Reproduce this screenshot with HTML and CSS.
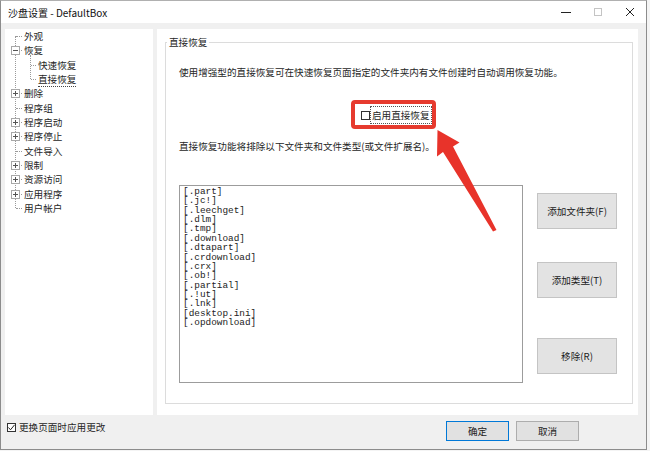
FILE: index.html
```html
<!DOCTYPE html>
<html lang="zh-CN">
<head>
<meta charset="utf-8">
<title>沙盘设置 - DefaultBox</title>
<link rel="stylesheet" href="styles.css">
</head>
<body>
<div class="window">
  <div class="titlebar">
    <span class="title">沙盘设置 - DefaultBox</span>
    <div class="controls">
      <span class="ctl"><svg width="10" height="10" viewBox="0 0 10 10"><line x1="0" y1="5.5" x2="10" y2="5.5" stroke="#222" stroke-width="1"/></svg></span>
      <span class="ctl"><svg width="10" height="10" viewBox="0 0 10 10"><rect x="1.5" y="1.5" width="7" height="7" fill="none" stroke="#c4c4c4" stroke-width="1"/></svg></span>
      <span class="ctl"><svg width="10" height="10" viewBox="0 0 10 10"><path d="M1 1L9 9M9 1L1 9" stroke="#222" stroke-width="1"/></svg></span>
    </div>
  </div>
  <div class="body">
    <div class="main">
      <div class="tree">
        <div class="tree-list">
          <div class="item">外观</div>
          <div class="item"><span class="box minus"></span>恢复</div>
          <div class="children">
            <div class="item child">快速恢复</div>
            <div class="item child"><span class="sel">直接恢复</span></div>
          </div>
          <div class="item"><span class="box plus"></span>删除</div>
          <div class="item">程序组</div>
          <div class="item"><span class="box plus"></span>程序启动</div>
          <div class="item"><span class="box plus"></span>程序停止</div>
          <div class="item">文件导入</div>
          <div class="item"><span class="box plus"></span>限制</div>
          <div class="item"><span class="box plus"></span>资源访问</div>
          <div class="item"><span class="box plus"></span>应用程序</div>
          <div class="item">用户帐户</div>
        </div>
      </div>
      <div class="panel">
        <fieldset class="group">
          <legend>直接恢复</legend>
          <div class="group-body">
            <p class="desc">使用增强型的直接恢复可在快速恢复页面指定的文件夹内有文件创建时自动调用恢复功能。</p>
            <div class="enable-row">
              <div class="highlight">
                <span class="cb"></span><span class="cb-label">启用直接恢复</span>
              </div>
            </div>
            <p class="desc2">直接恢复功能将排除以下文件夹和文件类型(或文件扩展名)。</p>
            <div class="list-row">
              <div class="listbox">
                <div class="li">[.part]</div>
                <div class="li">[.jc!]</div>
                <div class="li">[.leechget]</div>
                <div class="li">[.dlm]</div>
                <div class="li">[.tmp]</div>
                <div class="li">[.download]</div>
                <div class="li">[.dtapart]</div>
                <div class="li">[.crdownload]</div>
                <div class="li">[.crx]</div>
                <div class="li">[.ob!]</div>
                <div class="li">[.partial]</div>
                <div class="li">[.!ut]</div>
                <div class="li">[.lnk]</div>
                <div class="li">[desktop.ini]</div>
                <div class="li">[.opdownload]</div>
              </div>
              <div class="side">
                <button class="btn side-btn">添加文件夹(F)</button>
                <button class="btn side-btn b2">添加类型(T)</button>
                <button class="btn side-btn b3">移除(R)</button>
              </div>
            </div>
          </div>
        </fieldset>
      </div>
    </div>
    <div class="footer">
      <label class="apply">
        <span class="fcb"><svg width="7" height="7" viewBox="0 0 7 7"><path d="M0.5 3.5L2.5 5.8L6.6 0.8" fill="none" stroke="#222" stroke-width="1"/></svg></span>
        <span>更换页面时应用更改</span>
      </label>
      <div class="actions">
        <button class="btn act default">确定</button>
        <button class="btn act">取消</button>
      </div>
    </div>
  </div>
  <svg class="arrow" width="75" height="115" viewBox="0 0 75 115">
    <polygon points="7.5,5 29.5,17.5 23,21.5 66.5,105 63,106.5 13,27 7,31.5" fill="#e8332a"/>
  </svg>
</div>
</body>
</html>
```

FILE: styles.css
```css
* {
  box-sizing: border-box;
}

html, body {
  margin: 0;
  padding: 0;
}

body {
  width: 650px;
  height: 451px;
  overflow: hidden;
  background: #f4f4f4;
  font-family: "Noto Sans CJK SC", "Liberation Sans", sans-serif;
  font-size: 9.6px;
  color: #262626;
}

.window {
  position: relative;
  width: 647px;
  height: 450px;
  border: 1px solid #8c8c8c;
  border-top-color: #b0b0b0;
  background: #f0f0f0;
  display: flex;
  flex-direction: column;
}

.titlebar {
  height: 22px;
  background: #fff;
  display: flex;
  align-items: center;
  padding-left: 7px;
  font-size: 10px;
  color: #111;
}

.controls {
  margin-left: auto;
  display: flex;
  height: 100%;
}

.ctl {
  width: 32px;
  display: flex;
  align-items: center;
  justify-content: center;
}

.ctl svg {
  display: block;
}

.body {
  flex: 1;
  display: flex;
  flex-direction: column;
  padding: 6px 8px 0 4px;
}

.main {
  display: flex;
  gap: 4px;
  height: 386px;
}

.tree {
  width: 148px;
  background: #fff;
}

.tree-list {
  position: relative;
}

.tree-list::before {
  content: "";
  position: absolute;
  left: 10px;
  top: 7px;
  bottom: 7px;
  border-left: 1px dotted #9a9a9a;
}

.item {
  position: relative;
  height: 14.35px;
  line-height: 14.35px;
  padding-left: 19px;
  white-space: nowrap;
}

.item::after {
  content: "";
  position: absolute;
  left: 11px;
  width: 6px;
  top: 7px;
  border-top: 1px dotted #9a9a9a;
}

.children {
  position: relative;
}

.children::before {
  content: "";
  position: absolute;
  left: 25px;
  top: -3px;
  bottom: 7px;
  border-left: 1px dotted #9a9a9a;
}

.item.child {
  padding-left: 33px;
}

.item.child::after {
  left: 26px;
  width: 5px;
}

.sel {
  border-bottom: 1px dotted #444;
}

.box {
  position: absolute;
  left: 6px;
  top: 3px;
  width: 9px;
  height: 9px;
  border: 1px solid #a8a8a8;
  background: #fff;
  z-index: 1;
}

.box::before {
  content: "";
  position: absolute;
  left: 1px;
  width: 5px;
  top: 3px;
  height: 1px;
  background: #555;
}

.box.plus::after {
  content: "";
  position: absolute;
  left: 3px;
  top: 1px;
  width: 1px;
  height: 5px;
  background: #555;
}

.panel {
  flex: 1;
  background: #fff;
  padding: 6px 5px 0 8px;
}

.group {
  margin: 0;
  padding: 0;
  border: 1px solid #dcdcdc;
  min-width: 0;
}

.group legend {
  margin-left: 1px;
  padding: 0 2px;
  line-height: 14px;
}

.group-body {
  padding: 16px 14px 20px 13px;
}

.desc,
.desc2 {
  margin: 0;
  line-height: 14px;
  white-space: nowrap;
}

.enable-row {
  margin-top: 21px;
  padding-left: 172px;
}

.highlight {
  display: inline-flex;
  align-items: center;
  height: 29px;
  border: 4px solid #e63a2e;
  border-radius: 4px;
  padding-left: 6px;
}

.cb {
  width: 9px;
  height: 9px;
  border: 1px solid #333;
  background: #fff;
  margin-top: 1px;
}

.cb-label {
  border: 1px dotted #555;
  padding: 0 1px;
  line-height: 16px;
  white-space: nowrap;
}

.desc2 {
  margin-top: 10px;
}

.list-row {
  display: flex;
  margin-top: 32px;
}

.listbox {
  width: 344px;
  height: 198px;
  border: 1px solid #9c9c9c;
  padding: 1px 3px;
  font-family: "Liberation Mono", monospace;
  font-size: 9.4px;
  color: #222;
}

.li {
  height: 9.36px;
  line-height: 9.36px;
  white-space: nowrap;
}

.side {
  margin-left: 14px;
  display: flex;
  flex-direction: column;
  padding-top: 8px;
}

.btn {
  font-family: "Noto Sans CJK SC", "Liberation Sans", sans-serif;
  font-size: 9.6px;
  color: #1a1a1a;
  background: #e3e3e3;
  border: 1px solid #c4c4c4;
  padding: 0;
  margin: 0;
}

.side-btn {
  width: 80px;
  height: 36px;
}

.side-btn.b2 {
  margin-top: 33px;
}

.side-btn.b3 {
  margin-top: 40px;
}

.footer {
  flex: 1;
  display: flex;
  align-items: flex-start;
  padding: 5px 59px 0 2px;
}

.apply {
  display: flex;
  align-items: center;
  gap: 3px;
  line-height: 14px;
}

.fcb {
  width: 9px;
  height: 9px;
  border: 1px solid #333;
  background: #fff;
  display: flex;
  align-items: center;
  justify-content: center;
}

.fcb svg {
  display: block;
}

.actions {
  margin-left: auto;
  margin-top: 1px;
  display: flex;
  gap: 7px;
}

.act {
  width: 63px;
  height: 20px;
  background: #e1e1e1;
  border-color: #adadad;
}

.act.default {
  border-color: #0078d7;
}

.arrow {
  position: absolute;
  left: 429px;
  top: 124px;
  display: block;
}
```
